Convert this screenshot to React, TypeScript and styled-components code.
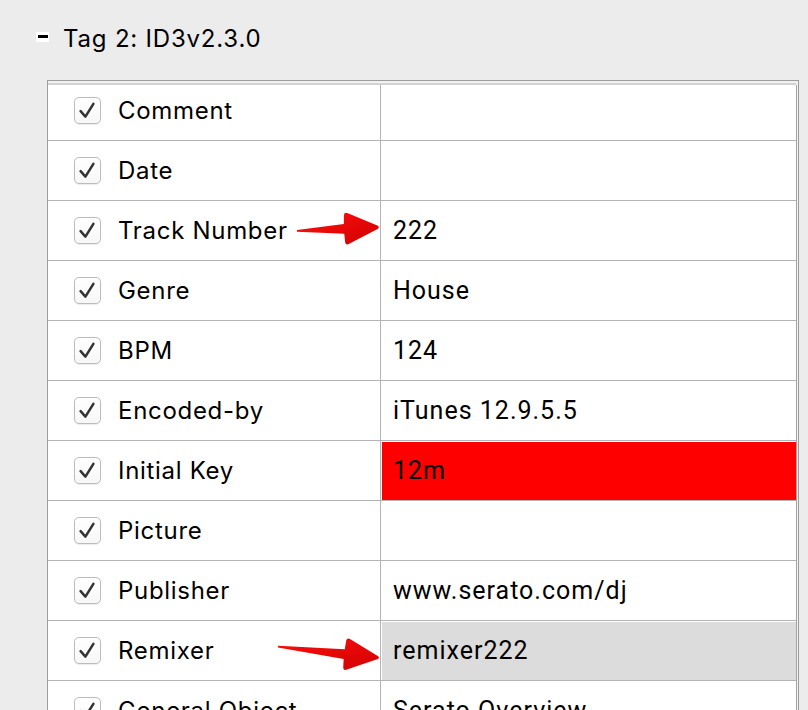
import React from "react";
import styled, { createGlobalStyle } from "styled-components";

const GlobalStyle = createGlobalStyle`
  html, body { margin: 0; padding: 0; background: #ececec; overflow: hidden; }
  #root { width: 808px; height: 710px; }
`;

const Page = styled.div`
  position: relative;
  width: 808px;
  height: 710px;
  overflow: hidden;
  background: #ececec;
`;

const Header = styled.div`
  height: 76px;
  display: flex;
  align-items: center;
  padding-left: 36px;
  gap: 14px;
  box-sizing: border-box;
`;

const Toggle = styled.div`
  width: 13px;
  height: 10px;
  background: #fff;
  display: flex;
  align-items: center;
  justify-content: center;
  margin-top: -3px;
  &::after {
    content: "";
    width: 10px;
    height: 3px;
    background: #000;
  }
`;

const Title = styled.div`
  font-family: Inter, "Liberation Sans", sans-serif;
  font-size: 24px;
  letter-spacing: 0.8px;
  color: #000;
`;

const Frame = styled.div`
  margin: 4px 0 0 47px;
  width: 752px;
  box-sizing: border-box;
  border: 1px solid #9d9d9d;
  border-bottom: none;
  background: #f2f2f2;
  padding: 2px 1px 0 0;
`;

const HeaderStrip = styled.div`
  height: 2px;
  background: #d2d2d2;
  margin-right: 1px;
`;

const Grid = styled.div`
  display: grid;
  grid-template-columns: 333px 1fr;
  background: #fff;
  border-right: 1px solid #a4a4a4;
`;

const LabelCell = styled.div<{ $first?: boolean }>`
  height: ${(p) => (p.$first ? 56 : 60)}px;
  padding-bottom: ${(p) => (p.$first ? 4 : 0)}px;
  box-sizing: border-box;
  border-bottom: 1px solid #b4b4b4;
  border-right: 1px solid #b4b4b4;
  display: flex;
  align-items: center;
  padding-left: 26px;
  gap: 17px;
`;

const ValueCell = styled.div<{ $first?: boolean; $bg?: string }>`
  height: ${(p) => (p.$first ? 56 : 60)}px;
  padding-bottom: ${(p) => (p.$first ? 4 : 0)}px;
  box-sizing: border-box;
  border-bottom: 1px solid #b4b4b4;
  display: flex;
  align-items: center;
  padding-left: 12px;
  background: ${(p) => p.$bg || "#fff"};
  box-shadow: ${(p) => (p.$bg ? "inset 1px 1px 0 #fff" : "none")};
  font-family: Roboto, "Liberation Sans", sans-serif;
  font-size: 25px;
  letter-spacing: 1px;
  color: #000;
`;

const Box = styled.div`
  width: 27px;
  height: 27px;
  box-sizing: border-box;
  border: 1px solid #bcbcbc;
  border-radius: 5px;
  background: linear-gradient(#ffffff, #f7f7f7);
  box-shadow: 0 0.5px 1px rgba(0, 0, 0, 0.08);
  flex: none;
  display: flex;
`;

const Label = styled.span`
  font-family: Inter, "Liberation Sans", sans-serif;
  font-size: 24px;
  letter-spacing: 0.7px;
  color: #000;
`;

const Overlay = styled.svg`
  position: absolute;
  left: 0;
  top: 0;
  pointer-events: none;
`;

const Check = () => (
  <Box>
    <svg width="25" height="25" viewBox="0 0 25 25">
      <path
        d="M5.6 13.2 L10.4 18.6 L18.4 5.8"
        fill="none"
        stroke="#333"
        strokeWidth="2.5"
        strokeLinecap="round"
        strokeLinejoin="round"
      />
    </svg>
  </Box>
);

type Row = { label: string; value: string; bg?: string };

const rows: Row[] = [
  { label: "Comment", value: "" },
  { label: "Date", value: "" },
  { label: "Track Number", value: "222" },
  { label: "Genre", value: "House" },
  { label: "BPM", value: "124" },
  { label: "Encoded-by", value: "iTunes 12.9.5.5" },
  { label: "Initial Key", value: "12m", bg: "#ff0000" },
  { label: "Picture", value: "" },
  { label: "Publisher", value: "www.serato.com/dj" },
  { label: "Remixer", value: "remixer222", bg: "#dcdcdc" },
  { label: "General Object", value: "Serato Overview" },
];

const arrowPath = (L: number) =>
  `M0,-0.7 L${L - 35},-4.8 L${L - 34.5},-13.5 Q${L - 34},-17 ${L - 30.5},-15.3 L${L - 1},-1.4 Q${L + 0.8},0 ${L - 1},1.4 L${L - 30.5},15.3 Q${L - 34},17 ${L - 34.5},13.5 L${L - 35},5 L0,0.9 Z`;

const Arrow = ({ x1, y1, x2, y2 }: { x1: number; y1: number; x2: number; y2: number }) => {
  const L = Math.hypot(x2 - x1, y2 - y1);
  const a = (Math.atan2(y2 - y1, x2 - x1) * 180) / Math.PI;
  return (
    <path
      d={arrowPath(L)}
      fill="url(#arrowGrad)"
      transform={`translate(${x1} ${y1}) rotate(${a})`}
    />
  );
};

export default function App() {
  return (
    <Page>
      <GlobalStyle />
      <Header>
        <Toggle />
        <Title>Tag 2: ID3v2.3.0</Title>
      </Header>
      <Frame>
        <HeaderStrip />
        <Grid>
          {rows.map((r, i) => (
            <React.Fragment key={r.label}>
              <LabelCell $first={i === 0}>
                <Check />
                <Label>{r.label}</Label>
              </LabelCell>
              <ValueCell $first={i === 0} $bg={r.bg}>
                {r.value}
              </ValueCell>
            </React.Fragment>
          ))}
        </Grid>
      </Frame>
      <Overlay width="808" height="710" viewBox="0 0 808 710">
        <defs>
          <linearGradient id="arrowGrad" x1="0" y1="0" x2="1" y2="1">
            <stop offset="0" stopColor="#ff1010" />
            <stop offset="1" stopColor="#d00000" />
          </linearGradient>
        </defs>
        <Arrow x1={297} y1={230.8} x2={379} y2={227.2} />
        <Arrow x1={278} y1={646.5} x2={379} y2={657.8} />
      </Overlay>
    </Page>
  );
}
